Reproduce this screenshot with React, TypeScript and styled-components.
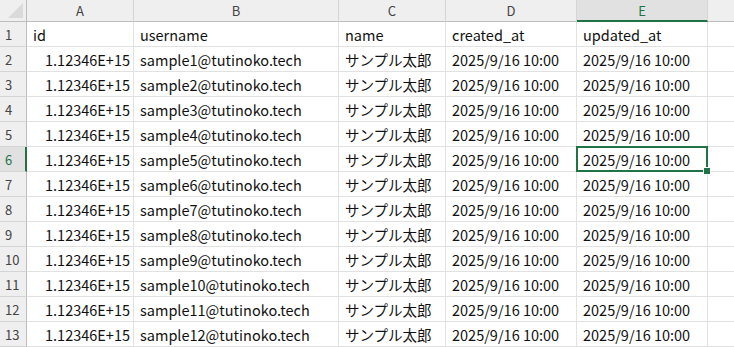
import React from "react";
import styled, { createGlobalStyle } from "styled-components";

const Global = createGlobalStyle`
  html, body { margin: 0; padding: 0; background: #ffffff; overflow: hidden; }
  body { font-family: "Noto Sans CJK JP", "Noto Sans", sans-serif; }
`;

const COLS = [27, 107, 205, 107, 131, 131, 60];
const SEL_COL = 5; // E
const SEL_ROW = 6;

const Sheet = styled.div`
  display: grid;
  grid-template-columns: ${COLS.map((c) => c + "px").join(" ")};
  grid-template-rows: 22px;
  grid-auto-rows: 25px;
  width: 734px;
  position: relative;
`;

const Corner = styled.div`
  background: #efefef;
  border-right: 1px solid #bdbdbd;
  border-bottom: 1px solid #bdbdbd;
  position: relative;
  box-sizing: border-box;
  &::after {
    content: "";
    position: absolute;
    right: 3px;
    bottom: 3px;
    width: 0;
    height: 0;
    border-left: 15px solid transparent;
    border-bottom: 15px solid #dadada;
  }
`;

const ColHead = styled.div<{ $sel?: boolean }>`
  box-sizing: border-box;
  background: ${(p) => (p.$sel ? "#e1e1e1" : "#efefef")};
  border-right: 1px solid #d5d5d5;
  border-bottom: ${(p) => (p.$sel ? "2px solid #217346" : "1px solid #bdbdbd")};
  display: flex;
  align-items: center;
  justify-content: center;
  font-size: 13px;
  color: ${(p) => (p.$sel ? "#217346" : "#444444")};
  padding-bottom: ${(p) => (p.$sel ? "0" : "1px")};
`;

const RowHead = styled.div<{ $sel?: boolean }>`
  box-sizing: border-box;
  background: ${(p) => (p.$sel ? "#e1e1e1" : "#efefef")};
  border-right: ${(p) => (p.$sel ? "2px solid #217346" : "1px solid #bdbdbd")};
  border-bottom: 1px solid #d5d5d5;
  display: flex;
  align-items: center;
  padding-left: 5px;
  padding-top: 1px;
  font-size: 13px;
  color: ${(p) => (p.$sel ? "#217346" : "#444444")};
`;

const Cell = styled.div<{ $right?: boolean }>`
  box-sizing: border-box;
  border-right: 1px solid #e1e1e1;
  border-bottom: 1px solid #e1e1e1;
  display: flex;
  align-items: center;
  justify-content: ${(p) => (p.$right ? "flex-end" : "flex-start")};
  padding: 1px 3px 0 6px;
  font-size: 14.5px;
  color: #111111;
  white-space: nowrap;
`;

const Selection = styled.div`
  position: absolute;
  box-sizing: border-box;
  border: 2px solid #217346;
  pointer-events: none;
  &::after {
    content: "";
    position: absolute;
    right: -5px;
    bottom: -5px;
    width: 6px;
    height: 6px;
    background: #217346;
    border: 1px solid #ffffff;
  }
`;

const letters = ["A", "B", "C", "D", "E", ""];

const header = ["id", "username", "name", "created_at", "updated_at", ""];

export default function App() {
  const rows: string[][] = [header];
  for (let i = 1; i <= 12; i++) {
    rows.push([
      "1.12346E+15",
      `sample${i}@tutinoko.tech`,
      "サンプル太郎",
      "2025/9/16 10:00",
      "2025/9/16 10:00",
      "",
    ]);
  }
  const left = COLS.slice(0, SEL_COL).reduce((a, b) => a + b, 0);
  const top = 22 + (SEL_ROW - 1) * 25;
  return (
    <>
      <Global />
      <Sheet>
        <Corner />
        {letters.map((l, i) => (
          <ColHead key={i} $sel={i + 1 === SEL_COL}>
            {l}
          </ColHead>
        ))}
        {rows.map((r, ri) => (
          <React.Fragment key={ri}>
            <RowHead $sel={ri + 1 === SEL_ROW}>{ri + 1}</RowHead>
            {r.map((v, ci) => (
              <Cell key={ci} $right={ri > 0 && ci === 0}>
                {v}
              </Cell>
            ))}
          </React.Fragment>
        ))}
        <Selection
          style={{ left: left - 1, top: top - 1, width: COLS[SEL_COL] + 1, height: 26 }}
        />
      </Sheet>
    </>
  );
}
